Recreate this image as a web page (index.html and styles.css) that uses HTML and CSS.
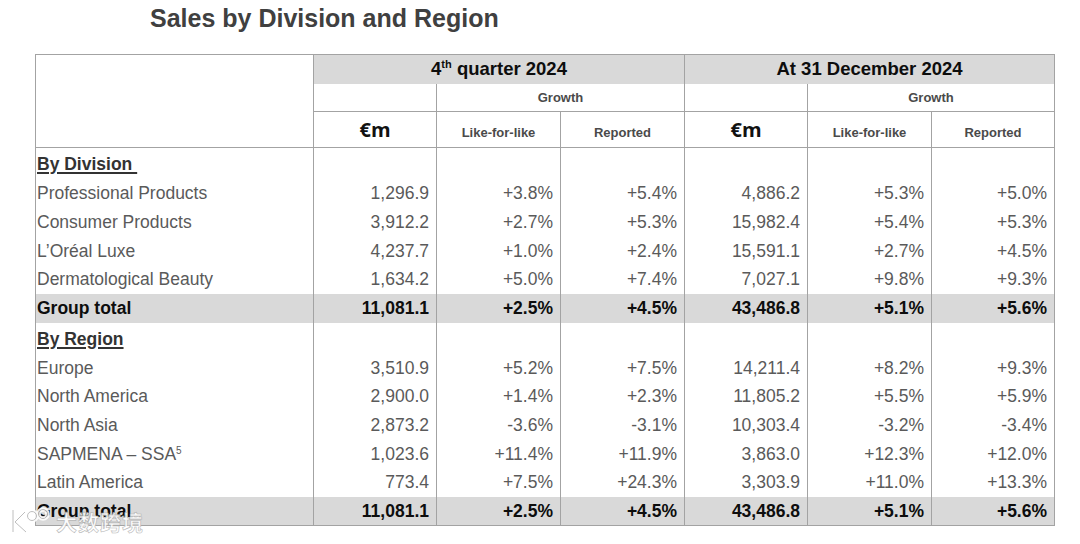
FILE: index.html
```html
<!DOCTYPE html>
<html lang="en">
<head>
<meta charset="utf-8">
<title>Sales by Division and Region</title>
<link rel="stylesheet" href="styles.css">
</head>
<body>
<div class="page">
  <h1 class="title">Sales by Division and Region</h1>
  <table class="sales">
    <colgroup>
      <col class="c-label">
      <col class="c-a"><col class="c-b"><col class="c-b">
      <col class="c-a"><col class="c-b"><col class="c-a">
    </colgroup>
    <thead>
      <tr class="hr1">
        <th rowspan="3" class="blank"></th>
        <th colspan="3" class="period">4<sup>th</sup> quarter 2024</th>
        <th colspan="3" class="period">At 31 December 2024</th>
      </tr>
      <tr class="hr2">
        <th class="empty"></th>
        <th colspan="2" class="growth">Growth</th>
        <th class="empty"></th>
        <th colspan="2" class="growth">Growth</th>
      </tr>
      <tr class="hr3">
        <th class="unit">€m</th>
        <th class="sub">Like-for-like</th>
        <th class="sub">Reported</th>
        <th class="unit">€m</th>
        <th class="sub">Like-for-like</th>
        <th class="sub">Reported</th>
      </tr>
    </thead>
    <tbody>
      <tr class="section"><td class="label"><span class="sect">By Division&nbsp;</span></td><td></td><td></td><td></td><td></td><td></td><td></td></tr>
      <tr class="r29"><td class="label">Professional Products</td><td>1,296.9</td><td>+3.8%</td><td>+5.4%</td><td>4,886.2</td><td>+5.3%</td><td>+5.0%</td></tr>
      <tr class="r29"><td class="label">Consumer Products</td><td>3,912.2</td><td>+2.7%</td><td>+5.3%</td><td>15,982.4</td><td>+5.4%</td><td>+5.3%</td></tr>
      <tr class="r28"><td class="label">L’Oréal Luxe</td><td>4,237.7</td><td>+1.0%</td><td>+2.4%</td><td>15,591.1</td><td>+2.7%</td><td>+4.5%</td></tr>
      <tr class="r29"><td class="label">Dermatological Beauty</td><td>1,634.2</td><td>+5.0%</td><td>+7.4%</td><td>7,027.1</td><td>+9.8%</td><td>+9.3%</td></tr>
      <tr class="total"><td class="label">Group total</td><td>11,081.1</td><td>+2.5%</td><td>+4.5%</td><td>43,486.8</td><td>+5.1%</td><td>+5.6%</td></tr>
      <tr class="section"><td class="label"><span class="sect">By Region</span></td><td></td><td></td><td></td><td></td><td></td><td></td></tr>
      <tr class="r28"><td class="label">Europe</td><td>3,510.9</td><td>+5.2%</td><td>+7.5%</td><td>14,211.4</td><td>+8.2%</td><td>+9.3%</td></tr>
      <tr class="r29"><td class="label">North America</td><td>2,900.0</td><td>+1.4%</td><td>+2.3%</td><td>11,805.2</td><td>+5.5%</td><td>+5.9%</td></tr>
      <tr class="r29"><td class="label">North Asia</td><td>2,873.2</td><td>-3.6%</td><td>-3.1%</td><td>10,303.4</td><td>-3.2%</td><td>-3.4%</td></tr>
      <tr class="r28"><td class="label">SAPMENA – SSA<sup class="fn">5</sup></td><td>1,023.6</td><td>+11.4%</td><td>+11.9%</td><td>3,863.0</td><td>+12.3%</td><td>+12.0%</td></tr>
      <tr class="r29"><td class="label">Latin America</td><td>773.4</td><td>+7.5%</td><td>+24.3%</td><td>3,303.9</td><td>+11.0%</td><td>+13.3%</td></tr>
      <tr class="total"><td class="label">Group total</td><td>11,081.1</td><td>+2.5%</td><td>+4.5%</td><td>43,486.8</td><td>+5.1%</td><td>+5.6%</td></tr>
    </tbody>
  </table>
</div>
<div class="watermark" aria-hidden="true">
  <svg class="wm-logo" width="46" height="32" viewBox="0 0 46 32">
    <g fill="none" stroke="#ffffff" stroke-width="4.5" stroke-linecap="round" stroke-linejoin="round">
      <path d="M7 5 V27"/>
      <path d="M19 7 L9 17 L20 27"/>
      <circle cx="26" cy="11" r="4.5"/>
      <circle cx="37" cy="9" r="4.5"/>
    </g>
    <g fill="none" stroke="#b8b8b8" stroke-width="1">
      <path d="M7 5 V27"/>
      <path d="M19 7 L9 17 L20 27"/>
      <circle cx="26" cy="11" r="4.5"/>
      <circle cx="37" cy="9" r="4.5"/>
    </g>
  </svg>
  <span class="wm-text">大数跨境</span>
</div>
</body>
</html>
```

FILE: styles.css
```css
html, body {
  margin: 0;
  padding: 0;
  background: #ffffff;
}

body {
  font-family: "Liberation Sans", Arial, Helvetica, sans-serif;
  position: relative;
  width: 1080px;
  height: 544px;
  overflow: hidden;
}

.page {
  padding: 3px 0 0 35px;
}

.title {
  margin: 0 0 21px 115px;
  font-size: 25px;
  line-height: 30px;
  font-weight: bold;
  color: #404040;
}

.sales {
  border-collapse: collapse;
  table-layout: fixed;
  width: 1020px;
  border: 1px solid #a3a3a3;
}

.c-label { width: 278px; }
.c-a { width: 123px; }
.c-b { width: 124px; }

.sales th,
.sales td {
  padding: 0;
  border-left: 1px solid #a3a3a3;
  border-right: 1px solid #a3a3a3;
}

/* header */
.sales thead tr:last-child th,
.sales th.blank {
  border-bottom: 1px solid #a3a3a3;
}

.hr1 { height: 29px; }
.hr2 { height: 28px; }
.hr3 { height: 36px; }

.period {
  background: #d9d9d9;
  color: #0d0d0d;
  font-size: 18.5px;
  font-weight: bold;
  text-align: center;
  vertical-align: middle;
}

.period sup {
  font-size: 11px;
  line-height: 0;
  vertical-align: 7px;
}

.growth {
  font-size: 13px;
  font-weight: bold;
  color: #4a4a4a;
  text-align: center;
  padding-top: 4px;
  border-bottom: 1px solid #a3a3a3;
}

.hr2 .empty {
  border-bottom: 1px solid #a3a3a3;
}

.unit {
  font-family: "Open Sans", "Liberation Sans", sans-serif;
  font-size: 20px;
  font-weight: bold;
  color: #111111;
  text-align: center;
}

.sales th.sub {
  font-size: 13px;
  font-weight: bold;
  color: #4a4a4a;
  text-align: center;
  padding-top: 5px;
}

/* body */
.sales td {
  font-size: 17.5px;
  color: #5a5a5a;
  text-align: right;
  padding-right: 7px;
  vertical-align: middle;
  line-height: 20px;
  white-space: nowrap;
}

.sales td.label {
  text-align: left;
  padding-left: 1px;
  padding-right: 0;
}

.section { height: 31px; }
.sales .section td { vertical-align: bottom; padding-bottom: 5px; }
.r28 { height: 28px; }
.r29 { height: 29px; }

.sect {
  font-weight: bold;
  color: #333333;
  text-decoration: underline;
  text-underline-offset: 2px;
  text-decoration-thickness: 1.5px;
}

.total { height: 29px; }
.total td {
  background: #d9d9d9;
  color: #0d0d0d;
  font-weight: bold;
}

.fn {
  font-size: 10px;
  line-height: 0;
  vertical-align: 6px;
}

/* watermark overlay */
.watermark {
  position: absolute;
  left: 6px;
  top: 505px;
  display: flex;
  align-items: center;
  gap: 4px;
  opacity: 0.9;
}

.wm-text {
  font-family: "Noto Sans CJK SC", sans-serif;
  font-size: 21px;
  font-weight: bold;
  color: #ffffff;
  letter-spacing: 1px;
  -webkit-text-stroke: 0.6px #b0b0b0;
  line-height: 30px;
}
```
